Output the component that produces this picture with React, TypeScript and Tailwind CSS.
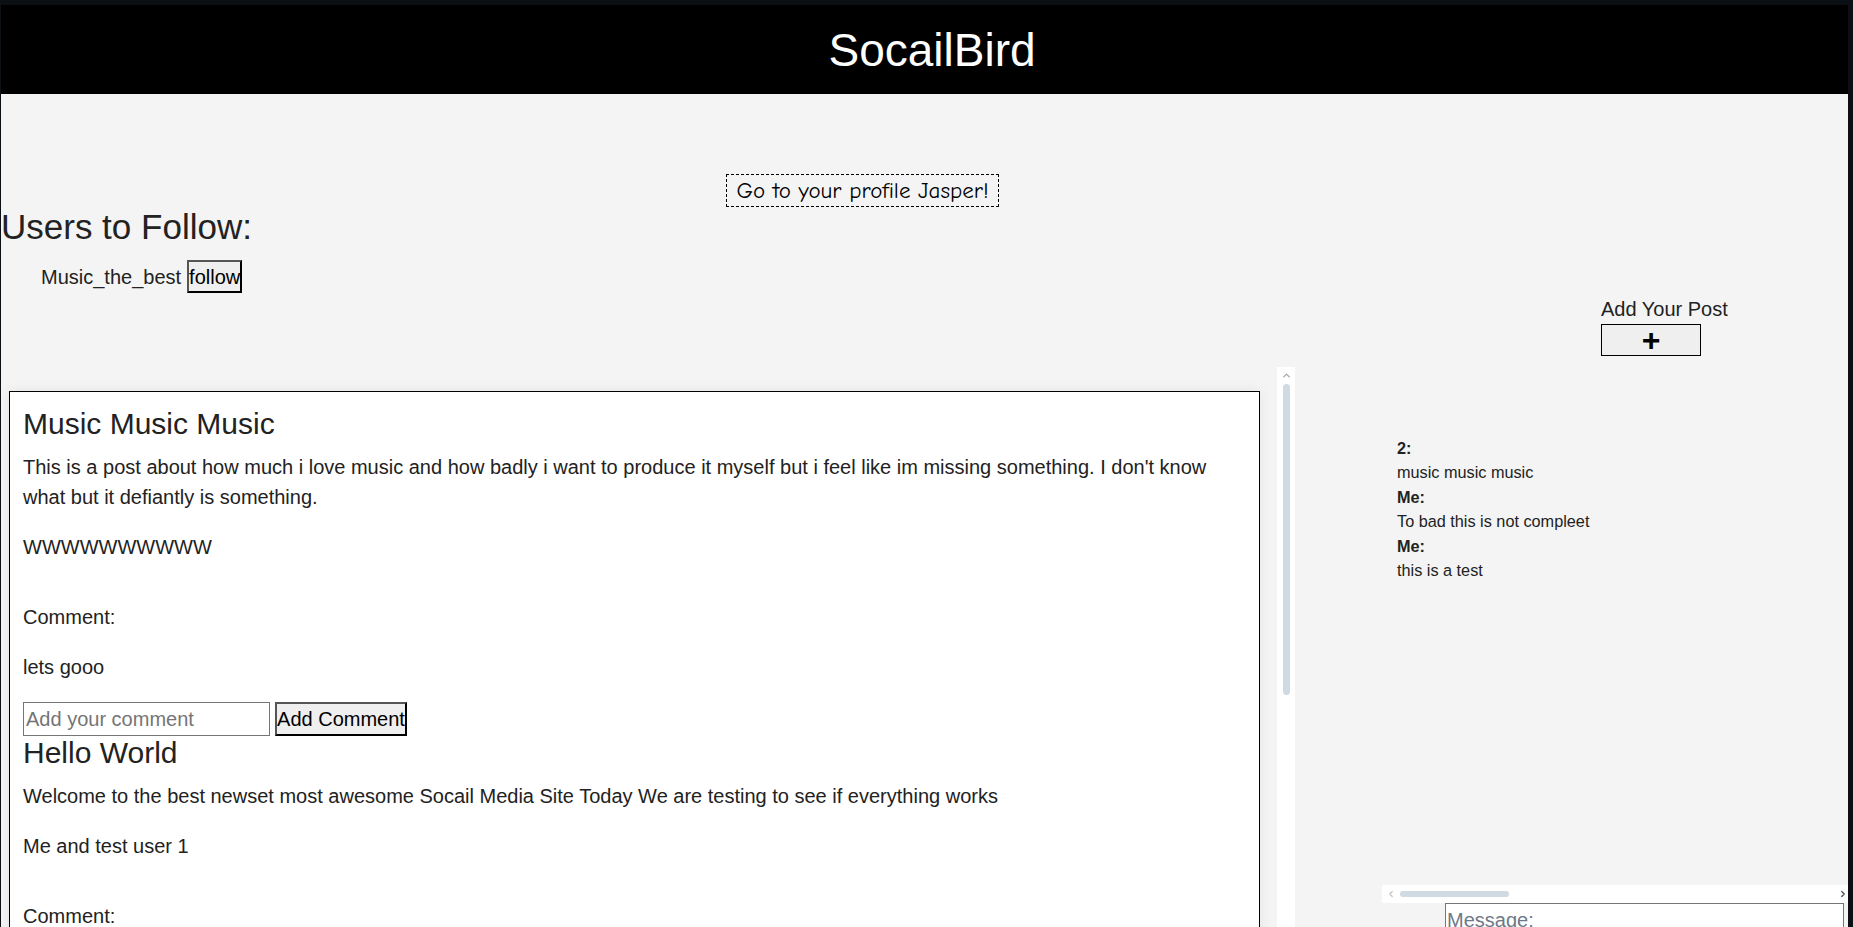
import { ChevronUp, ChevronLeft, ChevronRight } from 'lucide-react';

type Post = {
  title: string;
  body: string;
  author: string;
  comments: string[];
};

type Message = {
  from: string;
  text: string;
};

const posts: Post[] = [
  {
    title: 'Music Music Music',
    body: "This is a post about how much i love music and how badly i want to produce it myself but i feel like im missing something. I don't know what but it defiantly is something.",
    author: 'WWWWWWWWWW',
    comments: ['lets gooo'],
  },
  {
    title: 'Hello World',
    body: 'Welcome to the best newset most awesome Socail Media Site Today We are testing to see if everything works',
    author: 'Me and test user 1',
    comments: [],
  },
];

const messages: Message[] = [
  { from: '2', text: 'music music music' },
  { from: 'Me', text: 'To bad this is not compleet' },
  { from: 'Me', text: 'this is a test' },
];

const usersToFollow = ['Music_the_best'];

function PostCard({ post }: { post: Post }) {
  return (
    <div>
      <h2 className="text-[30px] leading-[34.5px]">{post.title}</h2>
      <p className="mt-[10.5px]">{post.body}</p>
      <p className="mt-[19.5px]">{post.author}</p>
      <p className="mt-[40.5px]">Comment:</p>
      {post.comments.map((c, i) => (
        <p key={i} className="mt-[20px]">{c}</p>
      ))}
      <form className="mt-[20px] flex items-center" onSubmit={e => e.preventDefault()}>
        <input
          placeholder="Add your comment"
          className="w-[247px] h-[34px] border border-[#767676] bg-white px-[2px] text-[20px] text-black placeholder:text-[#757575] outline-none"
        />
        <button className="ml-[5px] w-[132px] h-[34px] border-2 border-t-[#555] border-l-[#555] border-r-black border-b-black bg-[#efefef] px-0 text-[20px] leading-none text-black whitespace-nowrap">
          Add Comment
        </button>
      </form>
    </div>
  );
}

export default function App() {
  return (
    <div className="h-[927px] w-full overflow-hidden bg-[#0b1014] pt-[5px] pl-[1px] pr-[5px] font-['Liberation_Sans',Arial,sans-serif] text-[#222]">
      <div className="flex h-full flex-col bg-[#f4f4f4]">
        {/* Header */}
        <header className="flex h-[89px] shrink-0 items-center justify-center bg-black pl-[15px]">
          <h1 className="text-[46px] leading-none text-white">SocailBird</h1>
        </header>

        {/* Profile link */}
        <button className="mt-[80px] ml-[725px] flex h-[33px] w-[273px] shrink-0 items-center justify-center border border-dashed border-black font-['Comic_Sans_MS','Comic_Neue','Liberation_Sans',cursive] text-[23px] leading-none text-black whitespace-nowrap">
          Go to your profile Jasper!
        </button>

        {/* Users to follow */}
        <h1 className="shrink-0 text-[35px] leading-[40px]">Users to Follow:</h1>
        <ul className="mt-[13px] shrink-0 pl-[40px]">
          {usersToFollow.map(u => (
            <li key={u} className="flex h-[33px] items-center text-[20px]">
              <span>{u}</span>
              <button className="ml-[6px] h-[33px] w-[55px] border-2 border-t-[#555] border-l-[#555] border-r-black border-b-black bg-[#efefef] px-0 text-[20px] leading-none text-black">
                follow
              </button>
            </li>
          ))}
        </ul>

        {/* Add post */}
        <div className="mt-[5px] ml-[1600px] shrink-0">
          <div className="text-[20px] leading-[23px] whitespace-nowrap">Add Your Post</div>
          <button className="mt-[3px] flex h-[32px] w-[100px] items-center justify-center border border-black bg-[#efefef] text-[32px] font-bold leading-none text-black">
            +
          </button>
        </div>

        {/* Feed + chat */}
        <div className="mt-[11px] flex min-h-0 flex-1 overflow-hidden">
          <div className="flex w-[1294px] shrink-0">
            <div className="flex-1 overflow-hidden pt-[24px] pl-[8px] pr-[17px]">
              <div className="border border-black bg-white pt-[15px] pl-[13px] pr-[12px] pb-[20px] text-[20px] leading-[30px] shadow-[0_0_12px_rgba(0,0,0,0.07)]">
                {posts.map(p => (
                  <PostCard key={p.title} post={p} />
                ))}
              </div>
            </div>
            {/* vertical scrollbar */}
            <div className="flex w-[18px] flex-col items-center bg-white">
              <ChevronUp size={11} strokeWidth={3} className="mt-[3px] text-[#a8a8a8]" />
              <div className="mt-[3px] h-[311px] w-[7px] rounded-full bg-[#d0dae3]" />
            </div>
          </div>

          {/* Chat */}
          <div className="flex flex-1 flex-col pl-[87px]">
            <div className="h-[518px] shrink-0 pt-[69px] pl-[15px] text-[16.25px] leading-[24.4px]">
              {messages.map((m, i) => (
                <div key={i}>
                  <div className="font-bold">{m.from}:</div>
                  <div>{m.text}</div>
                </div>
              ))}
            </div>
            {/* horizontal scrollbar */}
            <div className="flex h-[18px] shrink-0 items-center bg-white">
              <ChevronLeft size={10} strokeWidth={3} className="ml-[4px] text-[#c4c4c4]" />
              <div className="ml-[4px] h-[6px] w-[109px] rounded-full bg-[#d0dae3]" />
              <div className="flex-1" />
              <ChevronRight size={10} strokeWidth={3} className="text-[#505050]" />
            </div>
            <input
              placeholder="Message:"
              className="ml-[63px] h-[34px] w-[399px] shrink-0 border border-[#767676] bg-white px-[1px] text-[20px] text-black placeholder:text-[#6e7987] outline-none"
            />
          </div>
        </div>
      </div>
    </div>
  );
}
